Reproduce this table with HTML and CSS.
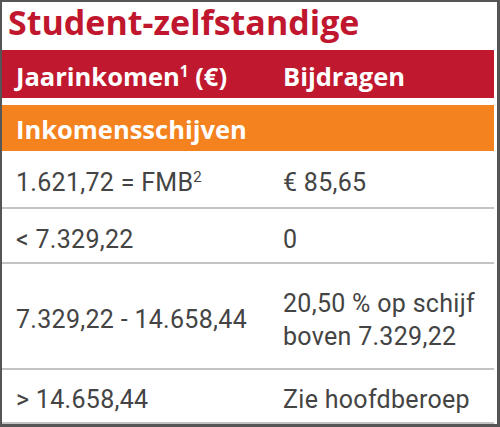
FILE: index.html
```html
<!DOCTYPE html>
<html lang="nl">
<head>
    <meta charset="UTF-8">
    <meta name="viewport" content="width=device-width, initial-scale=1.0">
    <title>Student-zelfstandige</title>
    <link rel="stylesheet" href="styles.css">
</head>
<body>

    <div class="frame">
        <h1 class="title">Student-zelfstandige</h1>

        <table class="rates">
            <thead>
                <tr class="head">
                    <th>Jaarinkomen<sup>1</sup> (€)</th>
                    <th>Bijdragen</th>
                </tr>
                <tr class="gap"><td colspan="2"></td></tr>
                <tr class="section">
                    <th colspan="2">Inkomensschijven</th>
                </tr>
            </thead>
            <tbody>
                <tr class="r1">
                    <td>1.621,72 = FMB<sup>2</sup></td>
                    <td>€ 85,65</td>
                </tr>
                <tr class="r2">
                    <td>&lt; 7.329,22</td>
                    <td>0</td>
                </tr>
                <tr class="r3">
                    <td>7.329,22 - 14.658,44</td>
                    <td>20,50 % op schijf<br>boven 7.329,22</td>
                </tr>
                <tr class="r4">
                    <td>&gt; 14.658,44</td>
                    <td>Zie hoofdberoep</td>
                </tr>
            </tbody>
        </table>
    </div>

</body>
</html>
```

FILE: styles.css
```css
body {
    margin: 0;
    background: #fff;
}

.frame {
    box-sizing: border-box;
    width: 500px;
    height: 427px;
    border-style: solid;
    border-color: #555;
    border-width: 2px 3px 3px 2px;
    background: #fff;
}

.title {
    margin: 0;
    height: 48px;
    padding-left: 6px;
    font-family: 'Open Sans', sans-serif;
    font-size: 34px;
    font-weight: 700;
    line-height: 40px;
    color: #c0172f;
}

.rates {
    width: 492px;
    border-collapse: separate;
    border-spacing: 0;
    font-family: Roboto, sans-serif;
}

.rates th,
.rates td {
    box-sizing: border-box;
}

.rates th {
    text-align: left;
    font-family: 'Open Sans', sans-serif;
    font-weight: 700;
    color: #fff;
    font-size: 25.5px;
    line-height: 30px;
    padding: 3px 0 0 14px;
}

.rates th:first-child {
    width: 267px;
}

.head th {
    height: 48px;
    background: #c0192f;
}

.gap td {
    height: 6px;
    padding: 0;
    border: 0;
}

.section th {
    height: 46px;
    padding-top: 1px;
    background: #f4821f;
}

.rates sup {
    font-size: 0.6em;
    line-height: 0;
}

.rates td {
    padding: 7px 0 0 14px;
    font-size: 25px;
    letter-spacing: 0.3px;
    color: #444;
    line-height: 33px;
}

.rates tbody td {
    border-bottom: 2px solid #c4c4c4;
}

.rates tbody td:first-child {
    width: 267px;
}

.r1 td { height: 58px; }
.r2 td { height: 55px; }
.r3 td { height: 106px; }
.r4 td { height: 54px; }
```
